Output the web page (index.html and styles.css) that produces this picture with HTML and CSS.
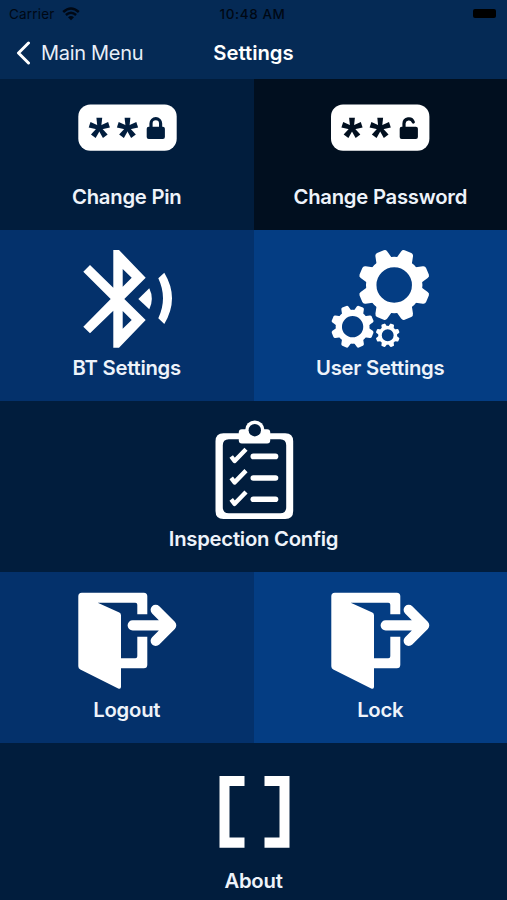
FILE: index.html
```html
<!DOCTYPE html>
<html lang="en">
<head>
    <meta charset="UTF-8">
    <meta name="viewport" content="width=device-width, initial-scale=1.0">
    <title>Settings</title>
    <link rel="stylesheet" href="styles.css">
</head>
<body>
    <!-- shared shapes -->
    <svg class="defs" width="0" height="0">
        <defs>
            <path id="arm" d="M-1.8 0 L-2.9 -10.2 H2.9 L1.8 0 Z"/>
            <g id="asterisk">
                <use href="#arm"/>
                <use href="#arm" transform="rotate(72)"/>
                <use href="#arm" transform="rotate(144)"/>
                <use href="#arm" transform="rotate(216)"/>
                <use href="#arm" transform="rotate(288)"/>
            </g>
            <path id="tooth" d="M-8.5 -25 L-6.4 -33.6 Q-5.8 -36 -3.6 -36 H3.6 Q5.8 -36 6.4 -33.6 L8.5 -25 Z"/>
            <g id="gear">
                <circle r="23" fill="none" stroke="#fff" stroke-width="10.5"/>
                <use href="#tooth" transform="rotate(22.5)"/>
                <use href="#tooth" transform="rotate(67.5)"/>
                <use href="#tooth" transform="rotate(112.5)"/>
                <use href="#tooth" transform="rotate(157.5)"/>
                <use href="#tooth" transform="rotate(202.5)"/>
                <use href="#tooth" transform="rotate(247.5)"/>
                <use href="#tooth" transform="rotate(292.5)"/>
                <use href="#tooth" transform="rotate(337.5)"/>
            </g>
            <path id="check" d="M-6.8 .3 L-3.4 4.8 L8 -7" fill="none" stroke="#fff" stroke-width="4.4" stroke-linejoin="round"/>
            <g id="door">
                <path d="M4.8 2.7 H66.8 Q70.3 2.7 70.3 6.2 V24.3 H60.3 V14.7 Q60.3 12.7 58.3 12.7 H20.7 L42.3 22.6 Q44 23.4 44 25.3 V68.3 H58.3 Q60.3 68.3 60.3 66.3 V46.7 H70.3 V74.8 Q70.3 78.3 66.8 78.3 H44 V96.8 Q44 99.6 41.2 98.6 L3.3 79.6 Q1.3 78.6 1.3 76.3 V6.2 Q1.3 2.7 4.8 2.7 Z"/>
                <path d="M55.7 35.3 H93 M78.7 19.8 L94.2 35.3 L78.7 50.8" fill="none" stroke="#fff" stroke-width="10.2" stroke-linecap="round" stroke-linejoin="round"/>
            </g>
        </defs>
    </svg>

    <div class="screen">
        <header class="header">
            <div class="status-bar">
                <div class="carrier">
                    <span>Carrier</span>
                    <svg class="wifi" viewBox="0 0 18 14">
                        <path d="M9 13.3 L6 10.2 Q9 7.8 12 10.2 Z"/>
                        <path d="M1.2 5 Q9 -2 16.8 5 M3.9 8 Q9 3.6 14.1 8" fill="none" stroke="#000814" stroke-width="2.5"/>
                    </svg>
                </div>
                <span class="time">10:48 AM</span>
                <span class="battery"></span>
            </div>
            <div class="nav-bar">
                <button class="back">
                    <svg class="chevron" viewBox="0 0 16 24">
                        <path d="M13.5 2 L3.5 12 L13.5 22" fill="none" stroke="#fff" stroke-width="3" stroke-linecap="round" stroke-linejoin="round"/>
                    </svg>
                    <span>Main Menu</span>
                </button>
                <h1 class="title">Settings</h1>
                <span></span>
            </div>
        </header>

        <main class="menu">
            <button class="tile tile-short navy">
                <svg class="icon icon-short" viewBox="0 0 100 50">
                    <rect x="1.3" y="1.5" width="98.4" height="46.2" rx="12"/>
                    <g class="ink-navy">
                        <use href="#asterisk" x="22.3" y="25"/>
                        <use href="#asterisk" x="50.5" y="25"/>
                        <rect x="69.7" y="23.7" width="18.2" height="12.3" rx="2"/>
                        <path class="shackle" d="M74 25 V20.5 A4.8 4.8 0 0 1 83.6 20.5 V25"/>
                    </g>
                </svg>
                <span class="label">Change Pin</span>
            </button>
            <button class="tile tile-short black">
                <svg class="icon icon-short" viewBox="0 0 100 50">
                    <rect x="1" y="1.5" width="98.4" height="46.2" rx="12"/>
                    <g class="ink-black">
                        <use href="#asterisk" x="22" y="25"/>
                        <use href="#asterisk" x="50.2" y="25"/>
                        <rect x="69.7" y="23.7" width="18.2" height="12.3" rx="2"/>
                        <path class="shackle" d="M74 25 V20.5 A4.8 4.8 0 0 1 83.3 19"/>
                    </g>
                </svg>
                <span class="label">Change Password</span>
            </button>

            <button class="tile blue">
                <svg class="icon" viewBox="0 0 100 100">
                    <path fill-rule="evenodd" d="M36.3 2 H42 L68.7 29.7 L47.3 51 L68.7 72 L42 99.7 H36.3 V62.7 L13 85.3 L6.3 78.7 L33.7 51 L6.3 23.7 L13 17 L36.3 39.7 Z M45.7 21 V38.7 L54.7 29.7 Z M45.7 63 V80.7 L54.7 72 Z"/>
                    <path d="M61.3 51 L72.3 40.3 Q77.3 50.8 72.3 61.3 Z"/>
                    <path d="M81.3 30.3 L87.3 24.7 Q102.7 50.3 87.3 76 L81.3 70.3 Q90.7 50.3 81.3 30.3 Z"/>
                </svg>
                <span class="label">BT Settings</span>
            </button>
            <button class="tile bright">
                <svg class="icon" viewBox="0 0 100 100">
                    <use href="#gear" transform="translate(64.2 37)"/>
                    <use href="#gear" transform="translate(22.6 78.7) scale(.6)"/>
                    <use href="#gear" transform="translate(57.7 87.3) scale(.335)"/>
                </svg>
                <span class="label">User Settings</span>
            </button>

            <button class="tile wide navy">
                <svg class="icon" viewBox="0 0 100 100">
                    <path fill-rule="evenodd" d="M19.5 14.3 H81.2 Q89.2 14.3 89.2 22.3 V92 Q89.2 100 81.2 100 H19.5 Q11.5 100 11.5 92 V22.3 Q11.5 14.3 19.5 14.3 Z M24.8 20.3 Q18.8 20.3 18.8 26.3 V88.3 Q18.8 94.3 24.8 94.3 H76.2 Q82.2 94.3 82.2 88.3 V26.3 Q82.2 20.3 76.2 20.3 Z"/>
                    <rect x="34.8" y="10.3" width="31.4" height="14.2" rx="3"/>
                    <circle cx="50.8" cy="11.2" r="9.7"/>
                    <circle class="ink-navy" cx="50.8" cy="11.2" r="6.2"/>
                    <use href="#check" x="34" y="37.2"/>
                    <use href="#check" x="34" y="58.6"/>
                    <use href="#check" x="34" y="80"/>
                    <rect x="46.5" y="34.6" width="27.8" height="5.6" rx="2.8"/>
                    <rect x="46.5" y="56.2" width="27.8" height="5.6" rx="2.8"/>
                    <rect x="46.5" y="77.5" width="27.8" height="5.6" rx="2.8"/>
                </svg>
                <span class="label">Inspection Config</span>
            </button>

            <button class="tile blue">
                <svg class="icon" viewBox="0 0 100 100"><use href="#door"/></svg>
                <span class="label">Logout</span>
            </button>
            <button class="tile bright">
                <svg class="icon" viewBox="0 0 100 100"><use href="#door"/></svg>
                <span class="label">Lock</span>
            </button>

            <button class="tile wide navy">
                <svg class="icon" viewBox="0 0 100 100">
                    <path d="M15.5 15 H40.5 V25 H25.5 V76.5 H40.5 V86.7 H15.5 Z"/>
                    <path d="M85.5 15 H60.5 V25 H75.5 V76.5 H60.5 V86.7 H85.5 Z"/>
                </svg>
                <span class="label">About</span>
            </button>
        </main>
    </div>
</body>
</html>
```
FILE: styles.css
```css
body {
    margin: 0;
    font-family: Inter, "Liberation Sans", sans-serif;
    background: #011d3d;
}

button {
    border: none;
    padding: 0;
    background: none;
    font-family: inherit;
    color: inherit;
    cursor: pointer;
}

.defs {
    display: block;
}

.screen {
    height: 900px;
    overflow: hidden;
    color: #fff;
}

/* Header */
.header {
    height: 79px;
    background: #052a55;
}

.status-bar {
    display: grid;
    grid-template-columns: 1fr auto 1fr;
    align-items: center;
    height: 27px;
    padding: 0 11px 0 9px;
    color: #000814;
    font-size: 13.5px;
}

.carrier {
    display: flex;
    align-items: center;
    gap: 7px;
    letter-spacing: 0.2px;
}

.wifi {
    width: 18px;
    height: 14px;
    fill: #000814;
}

.time {
    font-weight: 500;
    letter-spacing: 0.6px;
}

.battery {
    justify-self: end;
    width: 23px;
    height: 9px;
    border-radius: 2px;
    background: #000;
}

.nav-bar {
    display: grid;
    grid-template-columns: 1fr auto 1fr;
    align-items: center;
    height: 51px;
    padding: 0 15px;
}

.back {
    display: flex;
    align-items: center;
    gap: 10px;
    font-size: 20px;
    letter-spacing: -0.3px;
    color: #e9eff8;
}

.chevron {
    width: 16px;
    height: 24px;
}

.title {
    margin: 0;
    font-size: 20.3px;
    font-weight: 600;
}

/* Tiles */
.menu {
    display: grid;
    grid-template-columns: 1fr 1fr;
    grid-template-rows: 151px repeat(4, 171px);
}

.tile {
    display: flex;
    flex-direction: column;
    align-items: center;
    justify-content: flex-start;
    gap: 8px;
    padding-top: 18px;
}

.tile-short {
    gap: 32px;
    padding-top: 24px;
}

.wide {
    grid-column: span 2;
}

.navy {
    background: #011d3d;
}

.black {
    background: #010f1f;
}

.blue {
    background: #04316b;
}

.bright {
    background: #043d83;
}

.icon {
    width: 100px;
    height: 100px;
    fill: #fff;
}

.icon-short {
    height: 50px;
}

.ink-navy {
    fill: #011d3d;
    stroke: #011d3d;
    stroke-width: 0;
}

.ink-black {
    fill: #010f1f;
    stroke: #010f1f;
    stroke-width: 0;
}

.shackle {
    fill: none;
    stroke-width: 3.2;
    stroke-linecap: round;
}

.label {
    font-size: 20.3px;
    font-weight: 600;
    letter-spacing: -0.25px;
    line-height: 24px;
    color: #eef3fa;
}
```
